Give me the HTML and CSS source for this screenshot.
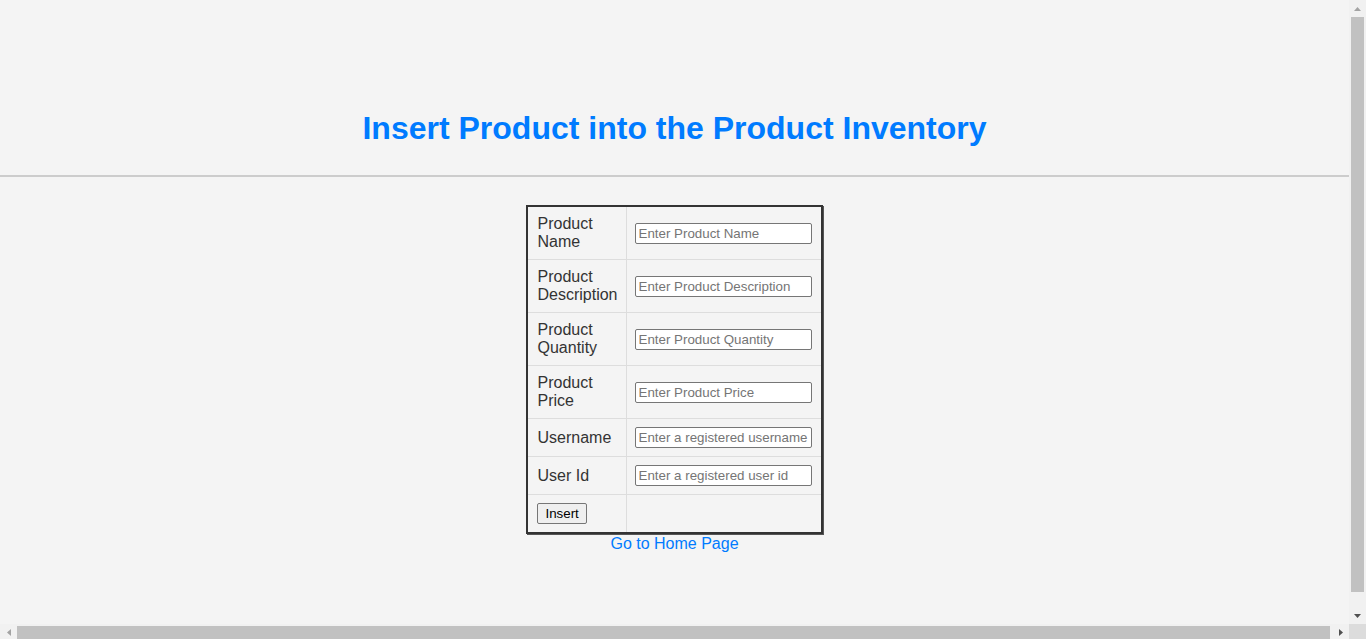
FILE: index.html
```html
<!DOCTYPE html>
<html lang="en">
<head>
<meta charset="utf-8">
<title>Insert Product</title>
<link rel="stylesheet" href="styles.css">
</head>
<body>
<div class="window">
  <div class="viewport">
    <header class="header">
      <h1 class="title">Insert Product into the Product Inventory</h1>
    </header>
    <main class="content">
      <form class="form" action="#">
        <table class="form-table">
          <tr>
            <td class="label">Product<br>Name</td>
            <td class="field"><input class="text-input" type="text" placeholder="Enter Product Name"></td>
          </tr>
          <tr>
            <td class="label">Product<br>Description</td>
            <td class="field"><input class="text-input" type="text" placeholder="Enter Product Description"></td>
          </tr>
          <tr>
            <td class="label">Product<br>Quantity</td>
            <td class="field"><input class="text-input" type="text" placeholder="Enter Product Quantity"></td>
          </tr>
          <tr>
            <td class="label">Product<br>Price</td>
            <td class="field"><input class="text-input" type="text" placeholder="Enter Product Price"></td>
          </tr>
          <tr>
            <td class="label">Username</td>
            <td class="field"><input class="text-input" type="text" placeholder="Enter a registered username"></td>
          </tr>
          <tr>
            <td class="label">User Id</td>
            <td class="field"><input class="text-input" type="text" placeholder="Enter a registered user id"></td>
          </tr>
          <tr>
            <td class="label"><button class="btn" type="button">Insert</button></td>
            <td class="field"></td>
          </tr>
        </table>
      </form>
      <a class="home-link" href="#">Go to Home Page</a>
    </main>
  </div>

  <div class="vscroll">
    <div class="arrow-btn">
      <svg width="7" height="4" viewBox="0 0 7 4"><polygon points="3.5,0 7,4 0,4" fill="#a3a3a3"/></svg>
    </div>
    <div class="vtrack"><div class="vthumb"></div></div>
    <div class="arrow-btn">
      <svg width="7" height="4" viewBox="0 0 7 4"><polygon points="0,0 7,0 3.5,4" fill="#505050"/></svg>
    </div>
  </div>

  <div class="hscroll">
    <div class="arrow-btn">
      <svg width="4" height="7" viewBox="0 0 4 7"><polygon points="4,0 4,7 0,3.5" fill="#a3a3a3"/></svg>
    </div>
    <div class="htrack"><div class="hthumb"></div></div>
    <div class="arrow-btn">
      <svg width="4" height="7" viewBox="0 0 4 7"><polygon points="0,0 4,3.5 0,7" fill="#505050"/></svg>
    </div>
  </div>

  <div class="corner"></div>
</div>
</body>
</html>
```
FILE: styles.css
```css
html, body {
  margin: 0;
  padding: 0;
}
body {
  background: #f4f4f4;
  color: #333;
  font-family: Arial, "Liberation Sans", sans-serif;
  font-size: 16px;
  height: 100vh;
  overflow: hidden;
}
.window {
  display: grid;
  grid-template-columns: 1fr 17px;
  grid-template-rows: 1fr 17px;
  height: calc(100vh + 2px);
  overflow: hidden;
}
.viewport {
  overflow: hidden;
  min-width: 0;
}
.header {
  padding: 110px 0 28px;
  border-bottom: 2px solid #ccc;
  text-align: center;
}
.title {
  margin: 0;
  font-size: 32px;
  line-height: 37px;
  font-weight: bold;
  color: #007bff;
}
.content {
  display: flex;
  flex-direction: column;
  align-items: center;
  padding-top: 28px;
}
.form {
  margin: 0;
}
.form-table {
  border-collapse: collapse;
  border: 2px solid #333;
  box-shadow: 1px 1px 0 #555;
}
.form-table td {
  border: 1px solid #ddd;
  padding: 8px;
  vertical-align: middle;
  line-height: 18px;
}
.form-table td.label {
  padding-left: 9px;
}
.form-table td.field {
  padding-right: 9px;
}
.text-input {
  font-family: Arial, "Liberation Sans", sans-serif;
  font-size: 13.333px;
  width: 177px;
  height: 21px;
  box-sizing: border-box;
  padding: 1px 3px;
  border: 1px solid #767676;
  border-radius: 2px;
  background: #fff;
  color: #333;
  vertical-align: middle;
}
.text-input::placeholder {
  color: #757575;
}
.btn {
  font-family: Arial, "Liberation Sans", sans-serif;
  font-size: 13.333px;
  height: 21px;
  padding: 1px 7px;
  border: 1px solid #767676;
  border-radius: 2px;
  background: #efefef;
  color: #000;
  vertical-align: middle;
}
.home-link {
  color: #007bff;
  text-decoration: none;
  line-height: 18px;
  margin-top: 1px;
}

/* scrollbars */
.vscroll {
  background: #f1f1f1;
  display: flex;
  flex-direction: column;
}
.hscroll {
  background: #f1f1f1;
  display: flex;
}
.arrow-btn {
  width: 17px;
  height: 17px;
  flex: none;
  display: flex;
  align-items: center;
  justify-content: center;
}
.vtrack {
  flex: 1;
  padding: 0 2px 15px;
}
.vthumb {
  height: 100%;
  background: #c1c1c1;
}
.htrack {
  flex: 1;
  padding: 2px 2px 2px 0;
}
.hthumb {
  height: 100%;
  background: #c1c1c1;
}
.corner {
  background: #dcdcdc;
}
```
